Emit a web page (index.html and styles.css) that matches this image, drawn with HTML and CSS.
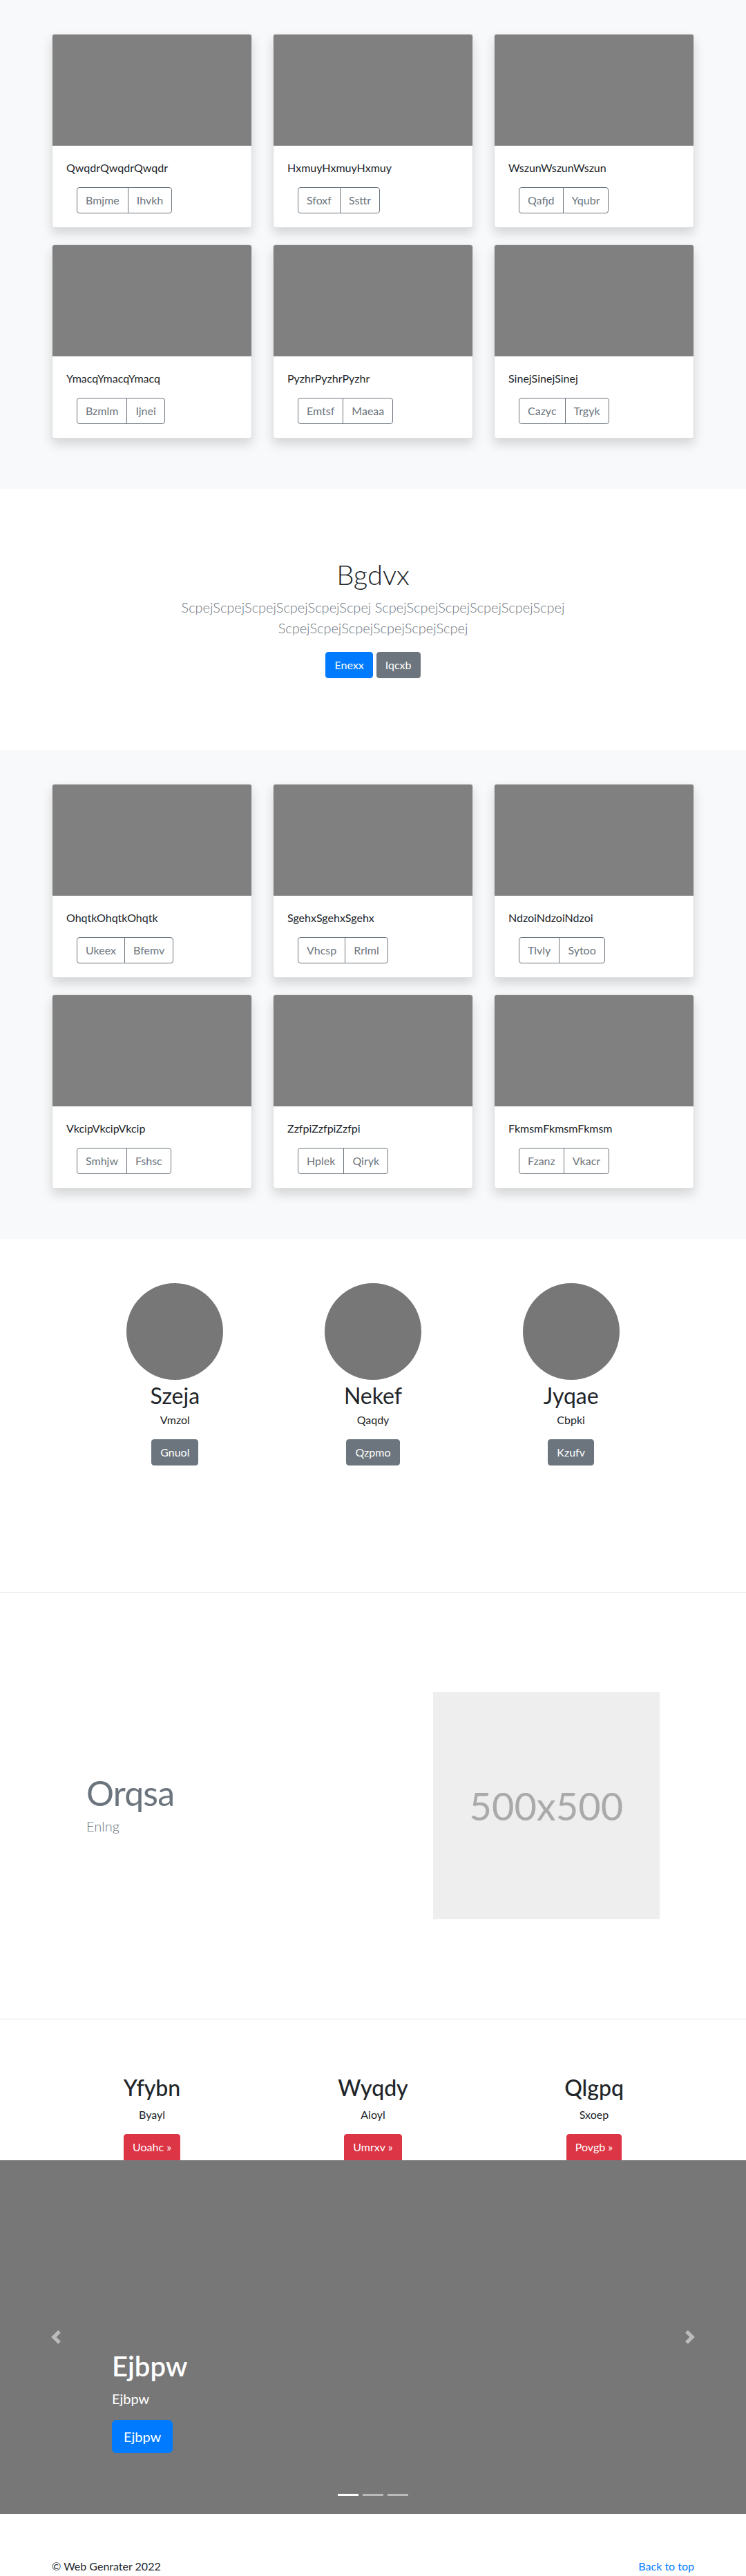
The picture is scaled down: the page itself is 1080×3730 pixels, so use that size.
FILE: index.html
```html
<!DOCTYPE html>
<html lang="en">

<head>
    <meta charset="UTF-8">
    <meta name="viewport" content="width=device-width, initial-scale=1.0">
    <title>Web Genrater</title>

    <link rel="stylesheet" href="styles.css">
</head>

<body>
    <!-- album 1 -->
    <section class="album">
        <div class="card-grid">
            <div class="card">
                <div class="card-img"></div>
                <div class="card-body">
                    <p class="card-text">QwqdrQwqdrQwqdr</p>
                    <div class="btn-group">
                        <a class="btn btn-outline" href="#">Bmjme</a>
                        <a class="btn btn-outline" href="#">Ihvkh</a>
                    </div>
                </div>
            </div>
            <div class="card">
                <div class="card-img"></div>
                <div class="card-body">
                    <p class="card-text">HxmuyHxmuyHxmuy</p>
                    <div class="btn-group">
                        <a class="btn btn-outline" href="#">Sfoxf</a>
                        <a class="btn btn-outline" href="#">Ssttr</a>
                    </div>
                </div>
            </div>
            <div class="card">
                <div class="card-img"></div>
                <div class="card-body">
                    <p class="card-text">WszunWszunWszun</p>
                    <div class="btn-group">
                        <a class="btn btn-outline" href="#">Qafjd</a>
                        <a class="btn btn-outline" href="#">Yqubr</a>
                    </div>
                </div>
            </div>
            <div class="card">
                <div class="card-img"></div>
                <div class="card-body">
                    <p class="card-text">YmacqYmacqYmacq</p>
                    <div class="btn-group">
                        <a class="btn btn-outline" href="#">Bzmlm</a>
                        <a class="btn btn-outline" href="#">Ijnei</a>
                    </div>
                </div>
            </div>
            <div class="card">
                <div class="card-img"></div>
                <div class="card-body">
                    <p class="card-text">PyzhrPyzhrPyzhr</p>
                    <div class="btn-group">
                        <a class="btn btn-outline" href="#">Emtsf</a>
                        <a class="btn btn-outline" href="#">Maeaa</a>
                    </div>
                </div>
            </div>
            <div class="card">
                <div class="card-img"></div>
                <div class="card-body">
                    <p class="card-text">SinejSinejSinej</p>
                    <div class="btn-group">
                        <a class="btn btn-outline" href="#">Cazyc</a>
                        <a class="btn btn-outline" href="#">Trgyk</a>
                    </div>
                </div>
            </div>
        </div>
    </section>

    <!-- hero -->
    <section class="hero">
        <div class="hero-inner">
            <h1>Bgdvx</h1>
            <p class="lead">ScpejScpejScpejScpejScpejScpej ScpejScpejScpejScpejScpejScpej ScpejScpejScpejScpejScpejScpej</p>
            <div class="hero-actions">
                <a class="btn btn-primary" href="#">Enexx</a>
                <a class="btn btn-secondary" href="#">Iqcxb</a>
            </div>
        </div>
    </section>

    <!-- album 2 -->
    <section class="album">
        <div class="card-grid">
            <div class="card">
                <div class="card-img"></div>
                <div class="card-body">
                    <p class="card-text">OhqtkOhqtkOhqtk</p>
                    <div class="btn-group">
                        <a class="btn btn-outline" href="#">Ukeex</a>
                        <a class="btn btn-outline" href="#">Bfemv</a>
                    </div>
                </div>
            </div>
            <div class="card">
                <div class="card-img"></div>
                <div class="card-body">
                    <p class="card-text">SgehxSgehxSgehx</p>
                    <div class="btn-group">
                        <a class="btn btn-outline" href="#">Vhcsp</a>
                        <a class="btn btn-outline" href="#">Rrlml</a>
                    </div>
                </div>
            </div>
            <div class="card">
                <div class="card-img"></div>
                <div class="card-body">
                    <p class="card-text">NdzoiNdzoiNdzoi</p>
                    <div class="btn-group">
                        <a class="btn btn-outline" href="#">Tlvly</a>
                        <a class="btn btn-outline" href="#">Sytoo</a>
                    </div>
                </div>
            </div>
            <div class="card">
                <div class="card-img"></div>
                <div class="card-body">
                    <p class="card-text">VkcipVkcipVkcip</p>
                    <div class="btn-group">
                        <a class="btn btn-outline" href="#">Smhjw</a>
                        <a class="btn btn-outline" href="#">Fshsc</a>
                    </div>
                </div>
            </div>
            <div class="card">
                <div class="card-img"></div>
                <div class="card-body">
                    <p class="card-text">ZzfpiZzfpiZzfpi</p>
                    <div class="btn-group">
                        <a class="btn btn-outline" href="#">Hplek</a>
                        <a class="btn btn-outline" href="#">Qiryk</a>
                    </div>
                </div>
            </div>
            <div class="card">
                <div class="card-img"></div>
                <div class="card-body">
                    <p class="card-text">FkmsmFkmsmFkmsm</p>
                    <div class="btn-group">
                        <a class="btn btn-outline" href="#">Fzanz</a>
                        <a class="btn btn-outline" href="#">Vkacr</a>
                    </div>
                </div>
            </div>
        </div>
    </section>

    <!-- people -->
    <section class="features">
        <div class="narrow feature-row">
            <div class="feature">
                <div class="avatar"></div>
                <h2>Szeja</h2>
                <p>Vmzol</p>
                <a class="btn btn-secondary" href="#">Gnuol</a>
            </div>
            <div class="feature">
                <div class="avatar"></div>
                <h2>Nekef</h2>
                <p>Qaqdy</p>
                <a class="btn btn-secondary" href="#">Qzpmo</a>
            </div>
            <div class="feature">
                <div class="avatar"></div>
                <h2>Jyqae</h2>
                <p>Cbpki</p>
                <a class="btn btn-secondary" href="#">Kzufv</a>
            </div>
        </div>
    </section>

    <!-- featurette -->
    <section class="featurette">
        <div class="narrow featurette-row">
            <div class="featurette-text">
                <h2>Orqsa</h2>
                <p class="lead">Enlng</p>
            </div>
            <div class="featurette-pic">
                <div class="placeholder">500x500</div>
            </div>
        </div>
    </section>

    <!-- highlights -->
    <section class="highlights">
        <div class="highlight-row">
            <div class="highlight">
                <h2>Yfybn</h2>
                <p>Byayl</p>
                <div class="highlight-action"><a class="btn btn-danger" href="#">Uoahc &raquo;</a></div>
            </div>
            <div class="highlight">
                <h2>Wyqdy</h2>
                <p>Aioyl</p>
                <div class="highlight-action"><a class="btn btn-danger" href="#">Umrxv &raquo;</a></div>
            </div>
            <div class="highlight">
                <h2>Qlgpq</h2>
                <p>Sxoep</p>
                <div class="highlight-action"><a class="btn btn-danger" href="#">Povgb &raquo;</a></div>
            </div>
        </div>
    </section>

    <!-- carousel -->
    <div class="carousel">
        <ol class="indicators">
            <li class="active"></li>
            <li></li>
            <li></li>
        </ol>
        <div class="caption">
            <h1>Ejbpw</h1>
            <p class="lead">Ejbpw</p>
            <p><a class="btn btn-lg btn-primary" href="#">Ejbpw</a></p>
        </div>
        <a class="control control-prev" href="#">
            <svg width="20" height="20" viewBox="0 0 8 8"><path fill="#fff" d="M5.25 0l-4 4 4 4 1.5-1.5L4.25 4l2.5-2.5L5.25 0z"/></svg>
        </a>
        <a class="control control-next" href="#">
            <svg width="20" height="20" viewBox="0 0 8 8"><path fill="#fff" d="M2.75 0l-1.5 1.5L3.75 4l-2.5 2.5L2.75 8l4-4-4-4z"/></svg>
        </a>
    </div>

    <footer class="footer">
        <p>&copy; Web Genrater 2022</p>
        <p><a href="#">Back to top</a></p>
    </footer>
</body>

</html>
```

FILE: styles.css
```css
* {
    margin: 0;
    padding: 0;
    box-sizing: border-box;
}

body {
    font-family: Lato, "Segoe UI", "Helvetica Neue", Arial, sans-serif;
    font-size: 16px;
    line-height: 1.5;
    color: #212529;
    background: #fff;
}

a {
    color: #007bff;
    text-decoration: none;
}

.lead {
    font-size: 20px;
    font-weight: 300;
}

/* buttons */
.btn {
    display: inline-block;
    padding: 6px 12px;
    font-size: 16px;
    line-height: 1.5;
    border: 1px solid transparent;
    border-radius: 4px;
    color: #fff;
}

.btn-primary {
    background: #007bff;
    border-color: #007bff;
}

.btn-secondary {
    background: #6c757d;
    border-color: #6c757d;
}

.btn-danger {
    background: #dc3545;
    border-color: #dc3545;
    border-radius: 4px 4px 0 0;
}

.btn-outline {
    color: #6c757d;
    border-color: #6c757d;
}

.btn-lg {
    padding: 8px 16px;
    font-size: 20px;
    border-radius: 6px;
}

.btn-group {
    display: inline-flex;
    margin-left: 15px;
}

.btn-group .btn:first-child {
    border-radius: 4px 0 0 4px;
}

.btn-group .btn:last-child {
    border-radius: 0 4px 4px 0;
    margin-left: -1px;
}

/* album */
.album {
    background: #f8f9fa;
    padding: 49px 0;
}

.card-grid {
    width: 930px;
    margin: 0 auto;
    display: grid;
    grid-template-columns: repeat(3, 1fr);
    column-gap: 30px;
}

.card {
    background: #fff;
    border: 1px solid rgba(0, 0, 0, .125);
    border-radius: 4px;
    box-shadow: 0 8px 16px rgba(0, 0, 0, .15);
    margin-bottom: 24px;
    overflow: hidden;
}

.card-img {
    height: 161px;
    background: #808080;
}

.card-body {
    padding: 20px;
}

.card-text {
    margin-bottom: 16px;
}

/* hero */
.hero {
    padding: 100px 0;
    text-align: center;
}

.hero-inner {
    width: 610px;
    margin: 0 auto;
}

.hero h1 {
    font-size: 40px;
    font-weight: 300;
    line-height: 1.2;
    margin-bottom: 8px;
}

.hero .lead {
    color: #6c757d;
    margin-bottom: 16px;
}

.hero-actions {
    display: flex;
    justify-content: center;
    gap: 5px;
    padding: 4px 0;
}

/* people */
.narrow {
    width: 860px;
    margin: 0 auto;
}

.features {
    padding: 64px 0 183px;
}

.feature-row {
    display: grid;
    grid-template-columns: repeat(3, 1fr);
    text-align: center;
}

.feature {
    padding: 0 15px;
}

.avatar {
    width: 140px;
    height: 140px;
    border-radius: 50%;
    background: #777;
    margin: 0 auto 4px;
}

.feature h2 {
    font-size: 32px;
    font-weight: 400;
    line-height: 1.2;
    margin-bottom: 4px;
}

.feature p {
    margin-bottom: 16px;
}

/* featurette */
.featurette {
    border-top: 1px solid rgba(0, 0, 0, .1);
    border-bottom: 1px solid rgba(0, 0, 0, .1);
    padding: 144px 0;
}

.featurette-row {
    display: grid;
    grid-template-columns: 7fr 5fr;
    align-items: center;
}

.featurette-text,
.featurette-pic {
    padding: 0 15px;
}

.featurette-text h2 {
    font-size: 50px;
    font-weight: 400;
    line-height: 1;
    letter-spacing: -0.8px;
    color: #6c757d;
    margin-bottom: 8px;
}

.featurette-text .lead {
    color: #6c757d;
}

.placeholder {
    aspect-ratio: 1 / 1;
    background: #eee;
    color: #aaa;
    font-size: 56px;
    display: flex;
    align-items: center;
    justify-content: center;
}

/* highlights */
.highlights {
    padding-top: 80px;
}

.highlight-row {
    width: 960px;
    margin: 0 auto;
    display: grid;
    grid-template-columns: repeat(3, 1fr);
    text-align: center;
}

.highlight h2 {
    font-size: 32px;
    font-weight: 500;
    line-height: 1.2;
    margin-bottom: 8px;
}

.highlight p {
    margin-bottom: 16px;
}

.highlight-action {
    display: flex;
    justify-content: center;
}

/* carousel */
.carousel {
    position: relative;
    height: 512px;
    background: #777;
    margin-bottom: 64px;
}

.caption {
    position: absolute;
    left: 15%;
    right: 15%;
    bottom: 52px;
    padding: 20px 0;
    color: #fff;
}

.caption h1 {
    font-size: 40px;
    font-weight: 600;
    line-height: 1.2;
    margin-bottom: 8px;
}

.caption .lead {
    font-weight: 400;
    margin-bottom: 16px;
}

.caption p {
    margin-bottom: 16px;
}

.control {
    position: absolute;
    top: 0;
    bottom: 0;
    width: 15%;
    display: flex;
    align-items: center;
    justify-content: center;
    opacity: .5;
}

.control-prev {
    left: 0;
}

.control-next {
    right: 0;
}

.indicators {
    position: absolute;
    left: 0;
    right: 0;
    bottom: 0;
    margin-bottom: 16px;
    display: flex;
    justify-content: center;
    list-style: none;
}

.indicators li {
    width: 30px;
    height: 23px;
    margin: 0 3px;
    border-top: 10px solid transparent;
    border-bottom: 10px solid transparent;
    background: #fff;
    background-clip: padding-box;
    opacity: .5;
}

.indicators li.active {
    opacity: 1;
}

/* footer */
.footer {
    width: 930px;
    margin: 0 auto;
    display: flex;
    justify-content: space-between;
}

.footer p {
    margin-bottom: 16px;
}
```
